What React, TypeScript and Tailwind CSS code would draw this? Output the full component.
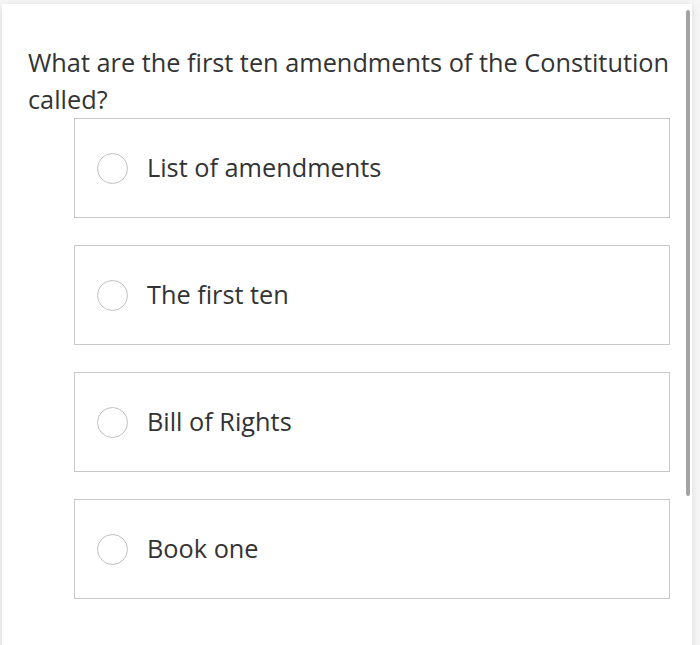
const options = ['List of amendments', 'The first ten', 'Bill of Rights', 'Book one'];

export default function App() {
  return (
    <div className="relative h-[645px] w-[700px] overflow-hidden bg-[#f6f6f6] font-['Open_Sans',sans-serif]">
      {/* panel */}
      <div className="absolute left-[2px] top-[4px] h-[660px] w-[690px] bg-white shadow-[0_2px_8px_rgba(0,0,0,0.12)]">
        <div className="pl-[26px] pt-[40px]">
          <p className="text-[25.3px] leading-[37px] text-[#333]">
            What are the first ten amendments of the Constitution called?
          </p>
          <div className="ml-[46px] mr-[22px] flex flex-col gap-[27px]">
            {options.map((opt) => (
              <label
                key={opt}
                className="flex h-[100px] items-center border border-[#c8c8c8] bg-white pl-[22px]"
              >
                <span className="h-[31px] w-[31px] shrink-0 rounded-full border-[1.5px] border-[#c0c0c0]" />
                <span className="ml-[19px] text-[25.3px] text-[#333]">{opt}</span>
              </label>
            ))}
          </div>
        </div>
      </div>
      {/* scrollbar */}
      <div className="absolute left-[686px] top-[10px] h-[486px] w-[4px] rounded-full bg-[#a3a3a3]" />
    </div>
  );
}
